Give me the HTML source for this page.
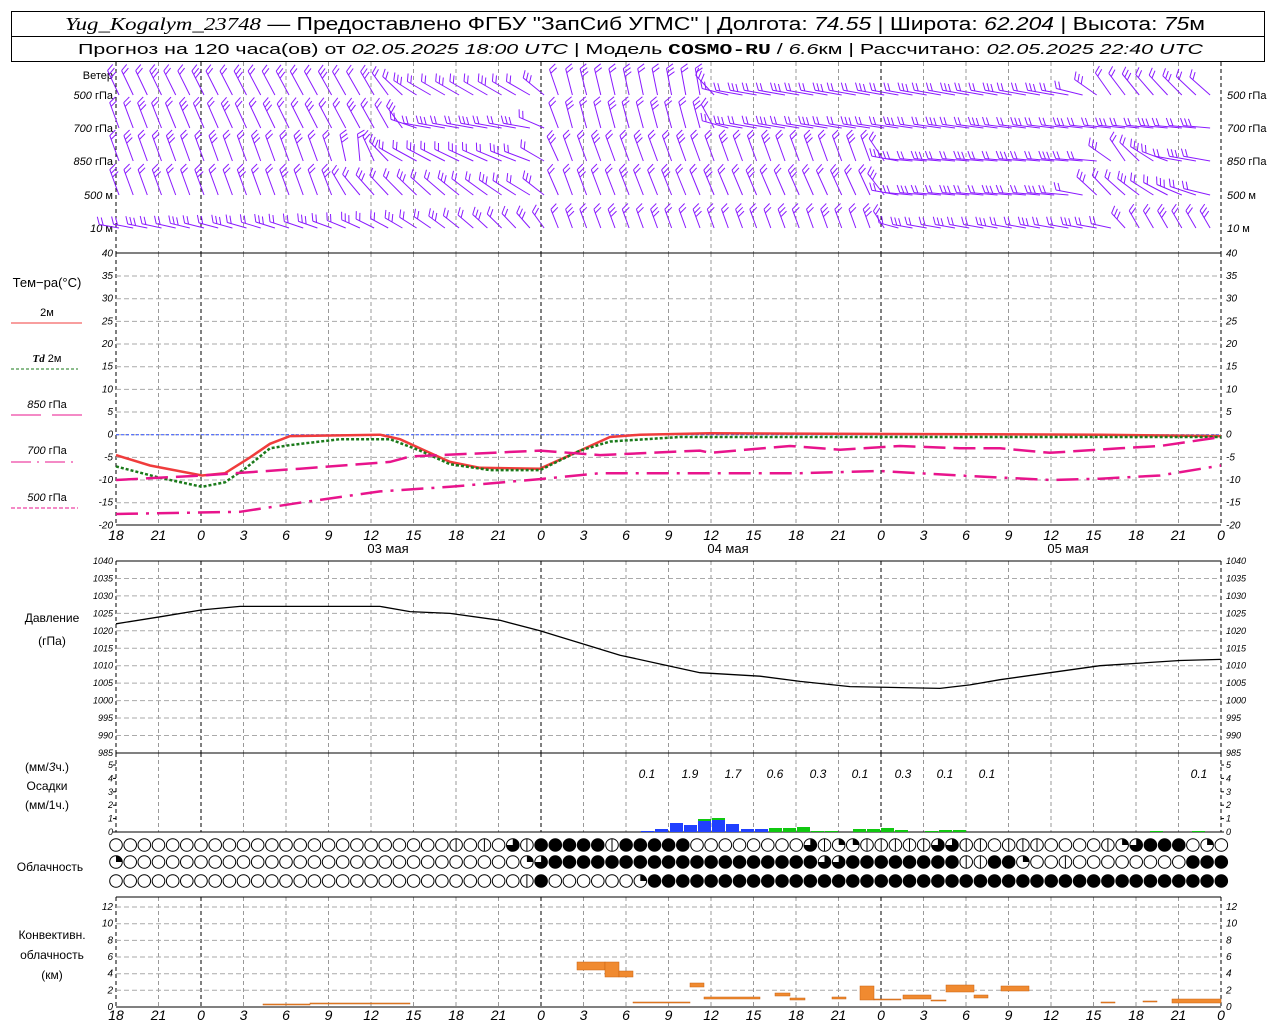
<!DOCTYPE html>
<html><head><meta charset="utf-8">
<style>
html,body{margin:0;padding:0;background:#fff;width:1280px;height:1024px;overflow:hidden}
svg{display:block}
text{font-family:"Liberation Sans","DejaVu Sans",sans-serif}
.it{font-style:italic}
</style></head>
<body>
<svg id="s" width="1280" height="1024" viewBox="0 0 1280 1024" xmlns="http://www.w3.org/2000/svg">
<rect x="11.5" y="11.5" width="1253" height="50" fill="#fff" stroke="#000"/>
<line x1="11" y1="36.5" x2="1265" y2="36.5" stroke="#000"/>
<text x="65" y="30" font-size="18" textLength="1140" lengthAdjust="spacingAndGlyphs"><tspan font-family="Liberation Serif" font-style="italic">Yug_Kogalym_23748</tspan> — Предоставлено ФГБУ "ЗапСиб УГМС" | Долгота: <tspan font-style="italic">74.55</tspan> | Широта: <tspan font-style="italic">62.204</tspan> | Высота: <tspan font-style="italic">75</tspan>м</text>
<text x="78" y="54" font-size="15" textLength="1125" lengthAdjust="spacingAndGlyphs">Прогноз на 120 часа(ов) от <tspan font-style="italic">02.05.2025 18:00 UTC</tspan>  | Модель <tspan font-weight="bold" font-family="Liberation Mono">COSMO-RU</tspan> / <tspan font-style="italic">6.6</tspan>км | Рассчитано: <tspan font-style="italic">02.05.2025 22:40 UTC</tspan></text>
<g font-size="12" text-anchor="middle">
<text x="47" y="287" font-size="13">Тем−ра(°С)</text>
<text x="47" y="316" font-size="11">2м</text>
<line x1="11" y1="323" x2="82" y2="323" stroke="#f03c3c"/>
<text x="47" y="362" font-size="11"><tspan font-style="italic" font-weight="bold" font-family="Liberation Serif">Td</tspan>  2м</text>
<line x1="11" y1="369" x2="78" y2="369" stroke="#1a7a1a" stroke-dasharray="3,2"/>
<text x="47" y="408" font-size="11"><tspan font-style="italic">850</tspan> гПа</text>
<line x1="11" y1="415" x2="41" y2="415" stroke="#e8148c"/><line x1="52" y1="415" x2="82" y2="415" stroke="#e8148c"/>
<text x="47" y="454" font-size="11"><tspan font-style="italic">700</tspan> гПа</text>
<line x1="11" y1="462" x2="78" y2="462" stroke="#e8148c" stroke-dasharray="20,6,2,6"/>
<text x="47" y="501" font-size="11"><tspan font-style="italic">500</tspan> гПа</text>
<line x1="11" y1="508" x2="78" y2="508" stroke="#e8148c" stroke-dasharray="4,2"/>
<text x="52" y="622">Давление</text>
<text x="52" y="645">(гПа)</text>
<text x="47" y="771">(мм/<tspan font-style="italic">3</tspan>ч.)</text>
<text x="47" y="790">Осадки</text>
<text x="47" y="809">(мм/1ч.)</text>
<text x="50" y="871">Облачность</text>
<text x="52" y="939">Конвективн.</text>
<text x="52" y="959">облачность</text>
<text x="52" y="979">(км)</text>
</g>
<g id="g"></g>
</svg>
<script>
var o=[];
function L(x1,y1,x2,y2,st){o.push('<line x1="'+x1.toFixed(1)+'" y1="'+y1.toFixed(1)+'" x2="'+x2.toFixed(1)+'" y2="'+y2.toFixed(1)+'" '+st+'/>');}
function T(x,y,s,st){o.push('<text x="'+x+'" y="'+y+'" '+st+'>'+s+'</text>');}
var X0=116,X1=1221;
var panels=[[62,253],[253,525],[561,753],[753,832],[897,1007]];
for(var k=0;k<=26;k++){var x=116+k*42.5;var day=(k==2||k==10||k==18||k==26||k==0);
 panels.forEach(function(p){L(x,p[0],x,p[1],'stroke="'+(day?'#000':'#999')+'" stroke-dasharray="4,3"');});}
function Ty(t){return 434.7-t*4.533;}
function Py(p){return 561+(1040-p)*3.49;}
function Ry(v){return 832-v*13.4;}
function Cy(v){return 1007-v*8.33;}
for(var t=-20;t<=40;t+=5){var y=Ty(t);if(t>-20&&t<40)L(X0,y,X1,y,'stroke="#aaa" stroke-dasharray="5,3"');
 T(113,y+3,t,'font-size="10" class="it" text-anchor="end"');T(1226,y+3,t,'font-size="10" class="it"');}
for(var p=985;p<=1040;p+=5){var y=Py(p);if(p>985&&p<1040)L(X0,y,X1,y,'stroke="#aaa" stroke-dasharray="5,3"');
 T(113,y+3,p,'font-size="9" class="it" text-anchor="end"');T(1226,y+3,p,'font-size="9" class="it"');}
for(var v=0;v<=5;v++){var y=Ry(v);T(113,y+3,v,'font-size="9" class="it" text-anchor="end"');T(1226,y+3,v,'font-size="9" class="it"');L(113,y,116,y,'stroke="#000"');L(1221,y,1224,y,'stroke="#000"');}
for(var v=0;v<=12;v+=2){var y=Cy(v);if(v>0)L(X0,y,X1,y,'stroke="#aaa" stroke-dasharray="5,3"');
 T(113,y+3,v,'font-size="10" class="it" text-anchor="end"');T(1226,y+3,v,'font-size="10" class="it"');}
L(X0,253,X1,253,'stroke="#000"');L(X0,753,X1,753,'stroke="#000"');L(X0,832,X1,832,'stroke="#000"');
L(X0,897,X1,897,'stroke="#000"');L(X0,1007,X1,1007,'stroke="#000"');L(X0,525,X1,525,'stroke="#000"');L(X0,561,X1,561,'stroke="#000"');
L(X0,Ty(0),X1,Ty(0),'stroke="#3050ff" stroke-dasharray="3,2"');
var hl=[18,21,0,3,6,9,12,15,18,21,0,3,6,9,12,15,18,21,0,3,6,9,12,15,18,21,0];
hl.forEach(function(h,k){var x=116+k*42.5;T(x,540,h,'font-size="14" class="it" text-anchor="middle"');T(x,1020,h,'font-size="14" class="it" text-anchor="middle"');});
T(388,553,'03 мая','font-size="13" text-anchor="middle"');T(728,553,'04 мая','font-size="13" text-anchor="middle"');T(1068,553,'05 мая','font-size="13" text-anchor="middle"');
var wl=[['Ветер',79,0],['<tspan class="it">500</tspan> гПа',99,1],['<tspan class="it">700</tspan> гПа',132,1],['<tspan class="it">850</tspan> гПа',165,1],['<tspan class="it">500</tspan>  м',199,1],['<tspan class="it">10</tspan>   м',232,1]];
wl.forEach(function(w){T(113,w[1],w[0],'font-size="11" text-anchor="end"');if(w[2])T(1227,w[1],w[0],'font-size="11"');});
function poly(pts,fy,st){var s=pts.map(function(q){return q[0]+','+fy(q[1]).toFixed(1);}).join(' ');o.push('<polyline points="'+s+'" fill="none" '+st+'/>');}
poly([[116,-4.5],[150,-6.8],[202,-9],[225,-8.5],[250,-5],[270,-2],[290,-0.3],[380,0],[400,-1],[425,-3.5],[450,-6],[480,-7.3],[540,-7.5],[560,-5.5],[580,-3.5],[610,-0.5],[640,0],[710,0.3],[1100,0],[1221,-0.3]],Ty,'stroke="#f03c3c" stroke-width="2.5"');
poly([[116,-7],[160,-9.5],[202,-11.5],[225,-10.5],[245,-7.5],[270,-3],[290,-2.3],[340,-1],[390,-1],[420,-3.5],[450,-6.5],[490,-7.8],[540,-7.8],[580,-3.5],[610,-1.5],[680,-0.5],[1221,-0.5]],Ty,'stroke="#1a7a1a" stroke-width="2.5" stroke-dasharray="3,2"');
poly([[116,-10],[202,-9],[300,-7.5],[390,-6],[410,-4.8],[540,-3.5],[600,-4.5],[700,-3.5],[710,-4],[790,-2.5],[840,-3.3],[900,-2.5],[960,-3],[1000,-3],[1050,-4],[1120,-3],[1160,-2.5],[1221,-0.5]],Ty,'stroke="#e8148c" stroke-width="2.5" stroke-dasharray="22,8"');
poly([[116,-17.5],[240,-17],[300,-15],[380,-12.5],[450,-11.5],[540,-9.8],[600,-8.5],[700,-8.5],[800,-8.5],[880,-8],[960,-9],[1050,-10],[1100,-9.7],[1160,-9],[1221,-6.8]],Ty,'stroke="#e8148c" stroke-width="2.5" stroke-dasharray="22,8,3,8"');
poly([[116,1022],[160,1024],[202,1026],[240,1027],[380,1027],[410,1025.5],[450,1025],[500,1023],[540,1020],[580,1016.5],[620,1013],[660,1010.5],[700,1008],[760,1007],[800,1005.5],[850,1004],[940,1003.5],[970,1004.5],[1000,1006],[1050,1008],[1100,1010],[1180,1011.5],[1221,1011.8]],Py,'stroke="#000" stroke-width="1.3"');
var pb=[[641,1,0,'b'],[655,3,0,'b'],[670,9,0,'b'],[684,7,0,'b'],[698,11,2,'b'],[712,12,2,'b'],[726,8,0,'b'],[741,3,0,'b'],[755,3,0,'b'],[769,4,0,'g'],[783,4,0,'g'],[797,5,0,'g'],[811,1,0,'g'],[825,1,0,'g'],[853,3,0,'g'],[867,3,0,'g'],[881,4,0,'g'],[895,2,0,'g'],[925,1,0,'g'],[939,2,0,'g'],[953,2,0,'g'],[1150,1,0,'g'],[1192,1,0,'g']];
pb.forEach(function(b){var c=b[3]=='b'?'#2040ff':'#10c810';o.push('<rect x="'+b[0]+'" y="'+(832-b[1])+'" width="13" height="'+b[1]+'" fill="'+c+'"/>');if(b[2])o.push('<rect x="'+b[0]+'" y="'+(832-b[1]-b[2])+'" width="13" height="'+b[2]+'" fill="#10c810"/>');});
[['0.1',647],['1.9',690],['1.7',733],['0.6',775],['0.3',818],['0.1',860],['0.3',903],['0.1',945],['0.1',987],['0.1',1199]].forEach(function(a){T(a[1],778,a[0],'font-size="12" class="it" text-anchor="middle"');});
var rows=[[845,"oooooooooooooooooooooooo"+"hohoth"+"xxxxx"+"h"+"xxxxx"+"oooooooo"+"thqqhhhhhtthh"+"ohhh"+"oooo"+"hqt"+"xxx"+"oqo"],
[862,"q"+"oooooooooooooooooooooooooooo"+"qt"+"xxxxxxxxxxxxxxxxxxx"+"tt"+"xxxxxxxx"+"hhxxqoohoooooooo"+"xxx"],
[881,"ooooooooooooooooooooooooooooo"+"hx"+"oooooo"+"q"+"xxxxxxxxxxxxxxxxxxxxxxxxxxxxxxxxxxxxxxxxx"]];
rows.forEach(function(r){var y=r[0],s=r[1];for(var i=0;i<79;i++){var cx=(116+i*14.17).toFixed(1),c=s[i]||'o',R=6.3;
 if(c=='x'){o.push('<circle cx="'+cx+'" cy="'+y+'" r="'+(R+0.5)+'" fill="#000"/>');continue;}
 o.push('<circle cx="'+cx+'" cy="'+y+'" r="'+R+'" fill="#fff" stroke="#000" stroke-width="1"/>');
 var X=+cx;
 if(c=='h')L(X,y-R,X,y+R,'stroke="#000"');
 if(c=='q')o.push('<path d="M'+X+' '+y+'L'+X+' '+(y-R)+'A'+R+' '+R+' 0 0 1 '+(X+R)+' '+y+'Z" fill="#000"/>');
 if(c=='t')o.push('<path d="M'+X+' '+y+'L'+X+' '+(y-R)+'A'+R+' '+R+' 0 1 1 '+(X-R)+' '+y+'Z" fill="#000"/>');
}});
var cb=[[263,1004,47,1],[310,1003,100,1],[577,962,28,8],[605,962,14,15],[619,971,14,6],[633,1002,57,1],[690,983,14,4],[704,997,56,2],[775,993,15,3],[790,998,15,2],[832,997,14,2],[860,986,14,14],[874,999,27,1],[903,995,28,4],[931,1000,15,1],[946,985,28,7],[974,995,14,3],[1001,986,28,5],[1101,1002,14,1],[1143,1001,14,1],[1172,999,49,4]];
cb.forEach(function(b){o.push('<rect x="'+b[0]+'" y="'+b[1]+'" width="'+b[2]+'" height="'+b[3]+'" fill="#f08a30" stroke="#c86010" stroke-width="0.5"/>');});
var keys=[
[95,27,[[116,-25],[380,-30],[420,-60],[540,-60],[560,-15],[700,-10],[730,-80],[1080,-80],[1110,-35],[1221,-50]]],
[128,27,[[116,-20],[400,-30],[420,-80],[540,-80],[560,-15],[710,-15],[730,-80],[1221,-85]]],
[161,27,[[116,-20],[330,-20],[360,-5],[400,-60],[540,-70],[560,-20],[880,-20],[900,-85],[1100,-85],[1120,-30],[1180,-80],[1221,-80]]],
[195,27,[[116,-20],[330,-20],[360,-40],[540,-60],[560,-20],[880,-25],[900,-85],[1080,-85],[1100,-40],[1221,-80]]],
[228,20,[[116,-80],[330,-70],[400,-60],[540,-40],[560,-20],[880,-20],[900,-80],[1110,-80],[1130,-30],[1221,-30]]]];
function interp(k,x){for(var j=0;j<k.length-1;j++){if(x<=k[j+1][0]){var f=(x-k[j][0])/(k[j+1][0]-k[j][0]);return k[j][1]+f*(k[j+1][1]-k[j][1]);}}return k[k.length-1][1];}
var st='stroke="#8a1aff" stroke-width="1"';
keys.forEach(function(r,ri){for(var i=0;i<79;i++){var x=116+i*14.17+3,y=r[0];if(x>1222)continue;
 var th=interp(r[2],x)*Math.PI/180,Ln=r[1];var dx=Math.sin(th),dy=-Math.cos(th);
 var tx=x+Ln*dx,ty=y+Ln*dy;L(x,y,tx,ty,st);
 var n=1+((i+ri)%3==0?2:1);var fa=th+65*Math.PI/180;
 for(var m=0;m<n;m++){var bx=tx-dx*m*4,by=ty-dy*m*4;var fl=8;L(bx,by,bx+fl*Math.sin(fa),by-fl*Math.cos(fa),st);}
}});
document.getElementById('g').innerHTML=o.join('');
</script>
</body></html>
